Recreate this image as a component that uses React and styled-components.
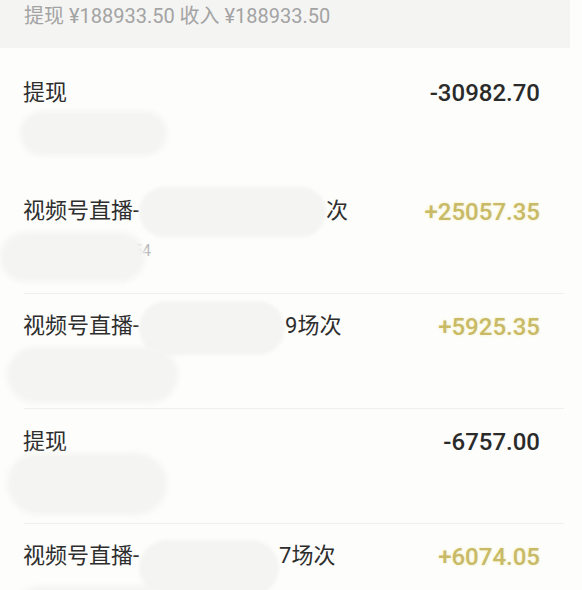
import styled, { createGlobalStyle } from "styled-components";

const GlobalStyle = createGlobalStyle`
  html, body {
    margin: 0;
    padding: 0;
    background: #fdfdfb;
  }
  body {
    font-family: Roboto, "Noto Sans CJK SC", sans-serif;
  }
`;

const Page = styled.div`
  width: 582px;
  height: 590px;
  overflow: hidden;
  background: #fdfdfb;
`;

const SummaryBar = styled.div`
  height: 48px;
  margin-right: 12px;
  background: #f4f4f3;
  padding-left: 24px;
  box-sizing: border-box;
`;

const SummaryText = styled.div`
  font-size: 20px;
  line-height: 32px;
  color: #a3a3a3;
  white-space: nowrap;
`;

const List = styled.div`
  padding-top: 12px;
`;

const Record = styled.div`
  position: relative;
  height: 115px;
  box-sizing: border-box;
  padding: 18px 42px 0 23px;
  &:first-child {
    height: 119px;
  }
  &::after {
    content: "";
    display: ${(p) => (p.$divider ? "block" : "none")};
    position: absolute;
    left: 24px;
    right: 18px;
    bottom: 0;
    height: 1px;
    background: #efefec;
  }
`;

const RecordTop = styled.div`
  display: flex;
  align-items: center;
  justify-content: space-between;
  height: 30px;
`;

const Title = styled.div`
  font-size: 22px;
  line-height: 30px;
  color: #2e2e2e;
  white-space: nowrap;
`;

// blurred patch that hides part of a line
const Redacted = styled.span`
  position: relative;
  z-index: 1;
  display: inline-block;
  vertical-align: middle;
  width: ${(p) => p.$w}px;
  height: ${(p) => p.$h}px;
  margin: ${(p) => -(p.$h - 30) / 2 + (p.$dy || 0)}px 0
    ${(p) => -(p.$h - 30) / 2 - (p.$dy || 0)}px;
  border-radius: ${(p) => p.$h / 2}px;
  background: #f4f4f2;
  filter: blur(1.5px);
`;

const Amount = styled.div`
  font-size: 24px;
  font-weight: 500;
  color: ${(p) => (p.$income ? "#c8ba66" : "#2a2a2a")};
  text-shadow: ${(p) =>
    p.$income ? "0 0 3px rgba(236, 226, 150, 0.6)" : "none"};
`;

const SubLine = styled.div`
  display: flex;
  align-items: flex-start;
  margin-top: ${(p) => p.$top}px;
  margin-left: ${(p) => p.$x}px;
`;

const SubPatch = styled.span`
  position: relative;
  z-index: 1;
  flex: none;
  width: ${(p) => p.$w}px;
  height: ${(p) => p.$h}px;
  border-radius: ${(p) => p.$h / 2}px;
  background: #f4f4f2;
  filter: blur(2.5px);
`;

const SubTail = styled.span`
  margin-top: 10px;
  margin-left: -12px;
  font-size: 16px;
  line-height: 18px;
  color: #b9b9b9;
`;

const records = [
  {
    title: ["提现"],
    amount: "-30982.70",
    sub: { x: -3, w: 147, h: 45, top: 3 },
  },
  {
    title: ["视频号直播-", { w: 187, h: 50, dy: -1 }, "次"],
    amount: "+25057.35",
    income: true,
    divider: true,
    sub: { x: -23, w: 145, h: 50, top: 5, tail: "54" },
  },
  {
    title: ["视频号直播-", { w: 146, h: 54, dy: 0 }, "9场次"],
    amount: "+5925.35",
    income: true,
    divider: true,
    sub: { x: -16, w: 171, h: 56, top: 5 },
  },
  {
    title: ["提现"],
    amount: "-6757.00",
    divider: true,
    sub: { x: -16, w: 160, h: 62, top: -4 },
  },
  {
    title: ["视频号直播-", { w: 140, h: 56, dy: 10 }, "7场次"],
    amount: "+6074.05",
    income: true,
    sub: { x: -8, w: 162, h: 50, top: 14 },
  },
];

const App = () => {
  return (
    <Page>
      <GlobalStyle />
      <SummaryBar>
        <SummaryText>提现 ¥188933.50 收入 ¥188933.50</SummaryText>
      </SummaryBar>
      <List>
        {records.map((r, i) => (
          <Record key={i} $divider={r.divider}>
            <RecordTop>
              <Title>
                {r.title.map((part, j) =>
                  typeof part === "string" ? (
                    <span key={j}>{part}</span>
                  ) : (
                    <Redacted key={j} $w={part.w} $h={part.h} $dy={part.dy} />
                  )
                )}
              </Title>
              <Amount $income={r.income}>{r.amount}</Amount>
            </RecordTop>
            <SubLine $top={r.sub.top} $x={r.sub.x}>
              <SubPatch $w={r.sub.w} $h={r.sub.h} />
              {r.sub.tail && <SubTail>{r.sub.tail}</SubTail>}
            </SubLine>
          </Record>
        ))}
      </List>
    </Page>
  );
};

export default App;
